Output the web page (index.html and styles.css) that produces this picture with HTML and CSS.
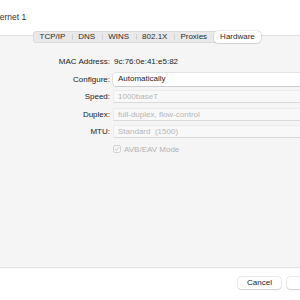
FILE: index.html
```html
<!DOCTYPE html>
<html lang="en">
  <head>
    <meta charset="UTF-8" />
    <title>Ethernet 1</title>
    <link rel="stylesheet" href="styles.css">
  </head>
  <body>
    <div class="window">
      <div class="title">Ethernet 1</div>

      <div class="tabs">
        <span class="tab">TCP/IP</span>
        <span class="tab">DNS</span>
        <span class="tab">WINS</span>
        <span class="tab">802.1X</span>
        <span class="tab">Proxies</span>
        <span class="tab active">Hardware</span>
      </div>

      <div class="panel">
        <div class="form">
          <span class="label">MAC Address:</span>
          <span class="value">9c:76:0e:41:e5:82</span>

          <span class="label">Configure:</span>
          <div class="popup">Automatically</div>

          <span class="label">Speed:</span>
          <div class="field">1000baseT</div>

          <span class="label">Duplex:</span>
          <div class="field">full-duplex, flow-control</div>

          <span class="label">MTU:</span>
          <div class="field">Standard&nbsp; (1500)</div>

          <span></span>
          <div class="check">
            <span class="box">
              <svg width="8" height="8" viewBox="0 0 8 8">
                <path d="M1.8 4.3 L3.4 6 L6.3 2" fill="none" stroke="#bdbdbd" stroke-width="1" stroke-linecap="round" stroke-linejoin="round" />
              </svg>
            </span>
            AVB/EAV Mode
          </div>
        </div>
      </div>

      <div class="actions">
        <button class="btn">Cancel</button>
        <button class="btn wide">OK</button>
      </div>
    </div>
  </body>
</html>
```

FILE: styles.css
```css
body {
  margin: 0;
  width: 300px;
  height: 300px;
  overflow: hidden;
  background-color: #ffffff;
  font-family: "Liberation Sans", Arial, sans-serif;
  font-size: 8px;
  color: #222;
}
.window {
  margin-left: -10px;
  width: 322px;
}
.title {
  height: 31px;
  box-sizing: border-box;
  padding-top: 13px;
  margin-left: -3px;
  font-size: 8.5px;
  line-height: 9px;
  color: #333;
  white-space: nowrap;
}
.tabs {
  position: relative;
  z-index: 1;
  display: flex;
  width: fit-content;
  height: 12px;
  margin-left: 43px;
  margin-bottom: -8px;
  background-color: #e9e9e9;
  border-radius: 4px;
  box-shadow: inset 0 0 0 0.5px rgba(0, 0, 0, 0.12);
}
.tab {
  position: relative;
  padding: 0 6.5px;
  line-height: 12px;
  color: #2a2a2a;
}
.tab + .tab::before {
  content: "";
  position: absolute;
  left: 0;
  top: 3px;
  width: 1px;
  height: 6px;
  background-color: #d2d2d2;
}
.tab.active {
  background-color: #ffffff;
  border-radius: 4px;
  box-shadow: 0 0 0 0.5px rgba(0, 0, 0, 0.14), 0 1px 1px rgba(0, 0, 0, 0.08);
}
.tab.active::before {
  display: none;
}
.panel {
  height: 233px;
  box-sizing: border-box;
  padding-top: 19px;
  background-color: #f5f5f5;
  border: 1px solid #dedede;
  border-radius: 5px;
}
.form {
  display: grid;
  grid-template-columns: 119px 1fr;
  grid-template-rows: repeat(6, 13px);
  column-gap: 3px;
  row-gap: 4.5px;
}
.label {
  text-align: right;
  line-height: 13px;
  color: #222;
}
.value {
  line-height: 13px;
  padding-left: 1px;
}
.popup {
  background-color: #ffffff;
  border-radius: 3px;
  padding-left: 5px;
  line-height: 12px;
  color: #1e1e1e;
  box-shadow: 0 0 0 0.5px rgba(0, 0, 0, 0.14), 0 1px 1px rgba(0, 0, 0, 0.1);
}
.field {
  box-sizing: border-box;
  background-color: #f8f8f8;
  border: 1px solid #ececec;
  border-bottom-color: #dadada;
  padding-left: 4px;
  line-height: 11px;
  color: #b6b6b6;
}
.check {
  display: flex;
  align-items: center;
  gap: 3px;
  color: #b3b3b3;
}
.box {
  display: flex;
  align-items: center;
  justify-content: center;
  width: 8px;
  height: 8px;
  box-sizing: border-box;
  border: 0.5px solid #d3d3d3;
  border-radius: 2px;
  background-color: #f7f7f7;
}
.actions {
  display: flex;
  gap: 6px;
  margin-top: 9px;
  padding-left: 248px;
}
.btn {
  height: 12px;
  padding: 0 9px;
  border: none;
  border-radius: 3px;
  background-color: #ffffff;
  font-family: "Liberation Sans", Arial, sans-serif;
  font-size: 8px;
  line-height: 12px;
  color: #222;
  box-shadow: 0 0 0 0.5px rgba(0, 0, 0, 0.16), 0 1px 1px rgba(0, 0, 0, 0.1);
}
.btn.wide {
  min-width: 46px;
}
```
